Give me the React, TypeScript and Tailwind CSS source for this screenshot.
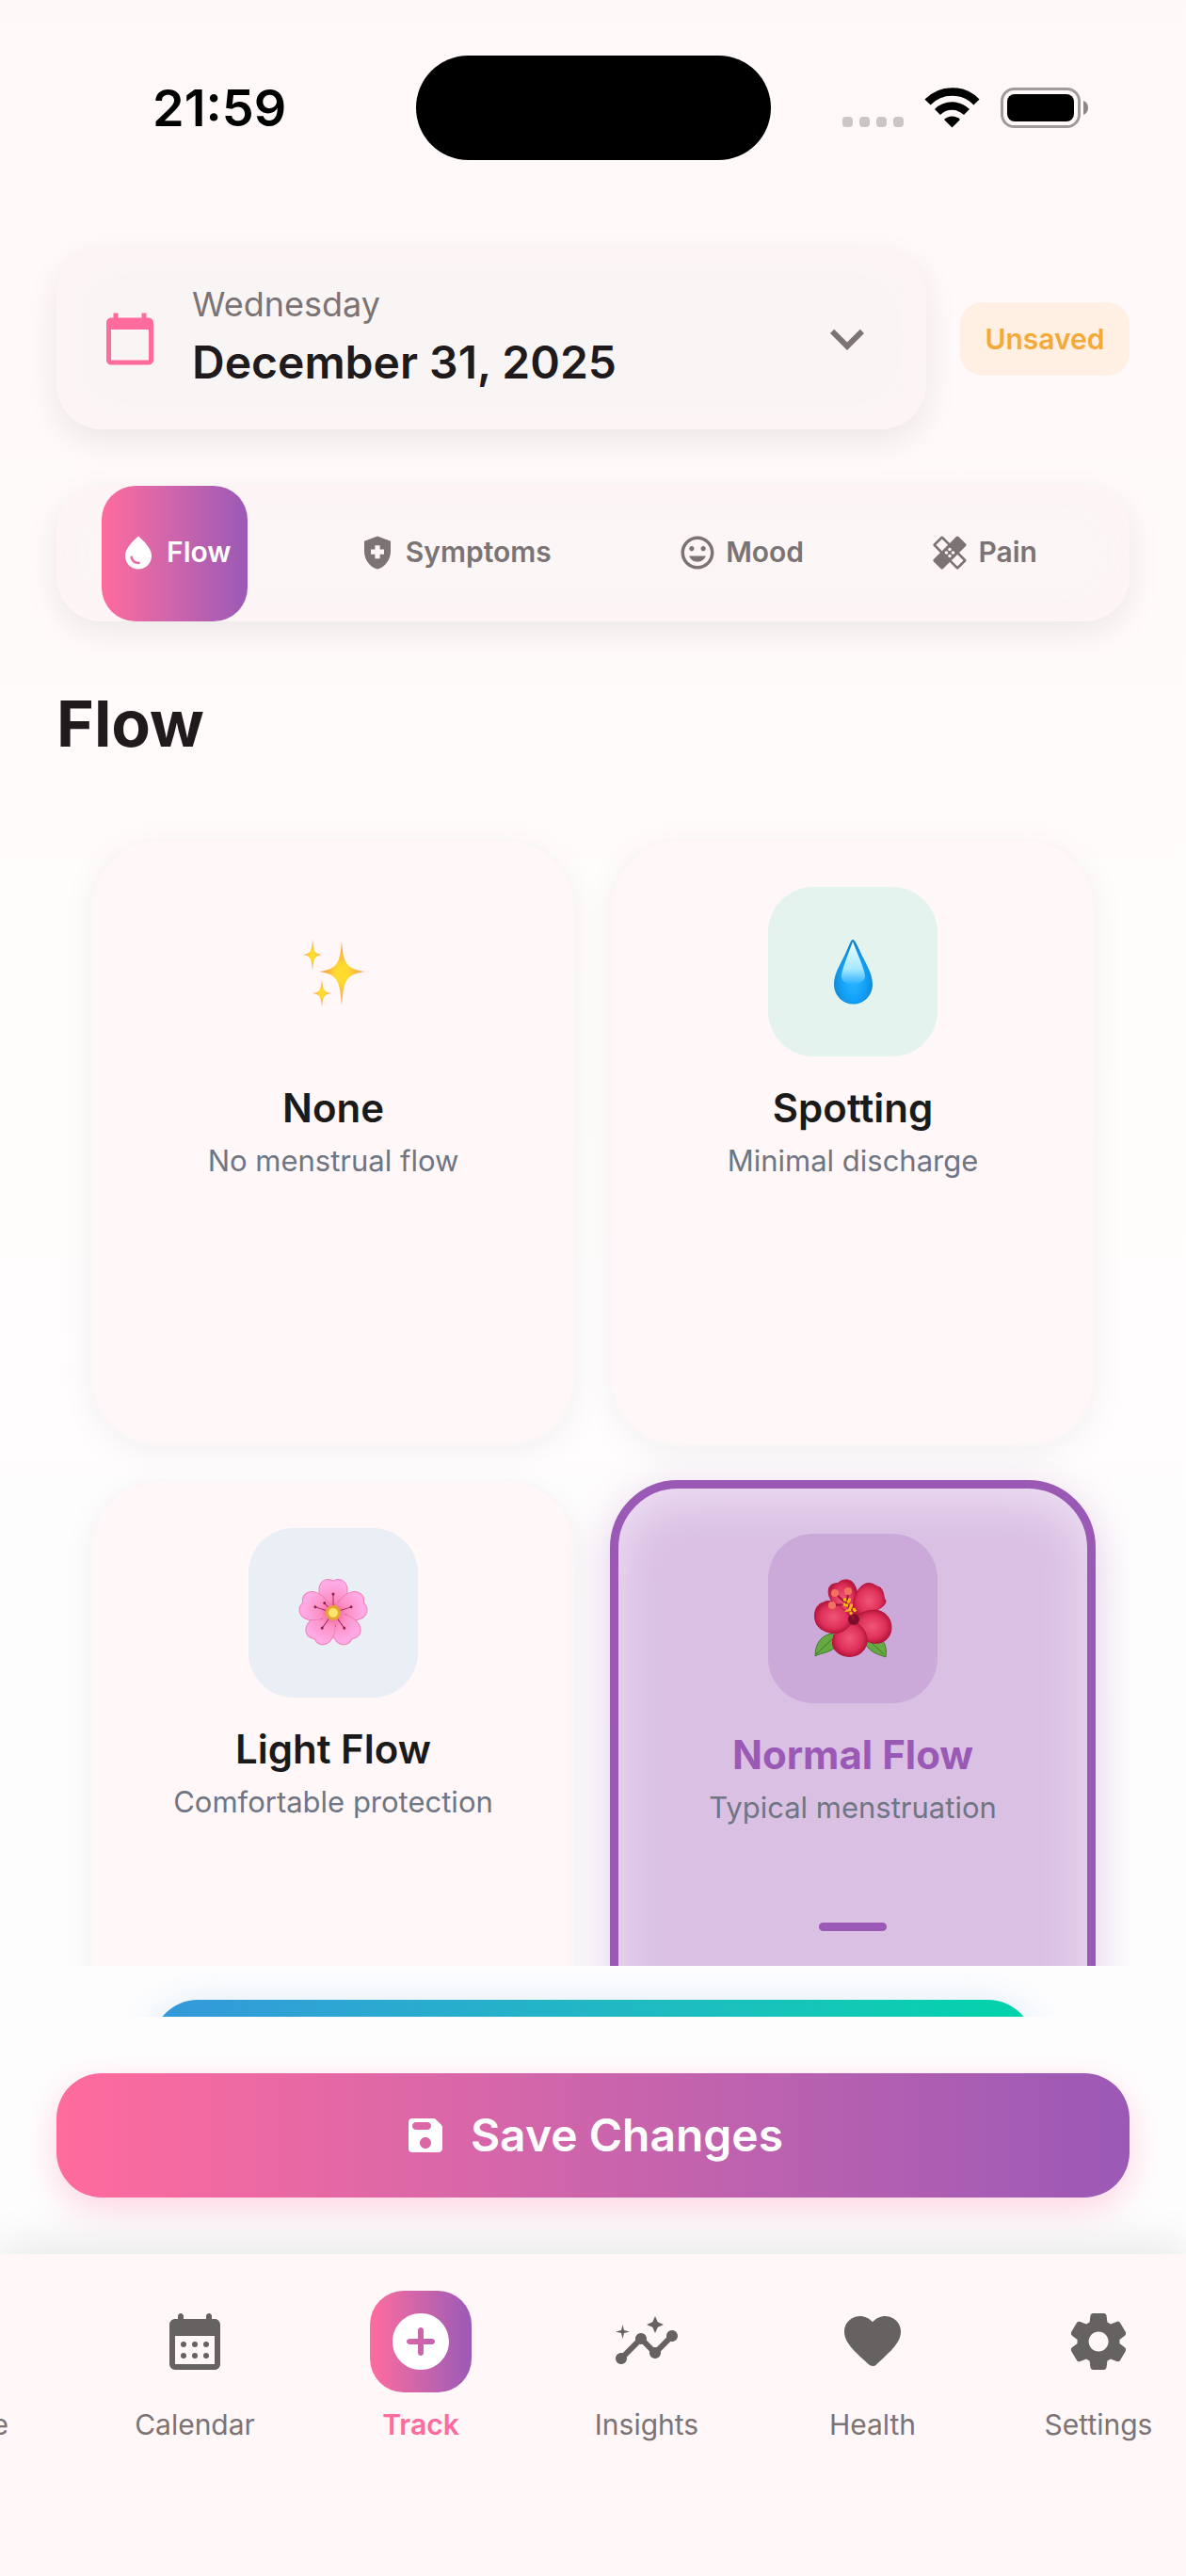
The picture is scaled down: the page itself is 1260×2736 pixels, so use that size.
import { useState, type ComponentType } from "react";
import {
  MdCalendarToday,
  MdHealing,
  MdHealthAndSafety,
  MdHome,
  MdInsights,
  MdKeyboardArrowDown,
  MdOutlineMood,
  MdWaterDrop,
} from "react-icons/md";

type IconProps = { className?: string };
type Icon = ComponentType<IconProps>;

// Rounded icon variants that react-icons does not ship
function SaveIcon({ className }: IconProps) {
  return (
    <svg viewBox="0 0 24 24" fill="currentColor" className={className}>
      <path d="M17.590 3.590C17.210 3.210 16.700 3 16.170 3H5a2 2 0 0 0-2 2v14a2 2 0 0 0 2 2h14c1.100 0 2-.9 2-2V7.830c0-.53-.21-1.040-.59-1.410l-2.820-2.830zM12 19c-1.660 0-3-1.340-3-3s1.340-3 3-3 3 1.340 3 3-1.340 3-3 3zm1-10H7c-1.100 0-2-.9-2-2s.9-2 2-2h6c1.100 0 2 .9 2 2s-.9 2-2 2z" />
    </svg>
  );
}

function CalendarIcon({ className }: IconProps) {
  return (
    <svg viewBox="0 0 24 24" fill="currentColor" className={className}>
      <path d="M17 2c-.55 0-1 .45-1 1v1H8V3c0-.55-.45-1-1-1s-1 .45-1 1v1H5c-1.110 0-1.990.9-1.990 2L3 20a2 2 0 0 0 2 2h14c1.100 0 2-.9 2-2V6c0-1.100-.9-2-2-2h-1V3c0-.55-.45-1-1-1zm2 18H5V10h14v10z" />
      <circle cx="8" cy="13" r="1" />
      <circle cx="12" cy="13" r="1" />
      <circle cx="16" cy="13" r="1" />
      <circle cx="8" cy="17" r="1" />
      <circle cx="12" cy="17" r="1" />
      <circle cx="16" cy="17" r="1" />
    </svg>
  );
}

function TrackIcon({ className }: IconProps) {
  return (
    <svg viewBox="0 0 24 24" fill="currentColor" className={className}>
      <path d="M12 2C6.480 2 2 6.480 2 12s4.480 10 10 10 10-4.480 10-10S17.520 2 12 2zm4 11h-3v3c0 .55-.45 1-1 1s-1-.45-1-1v-3H8c-.55 0-1-.45-1-1s.45-1 1-1h3V8c0-.55.45-1 1-1s1 .45 1 1v3h3c.55 0 1 .45 1 1s-.45 1-1 1z" />
    </svg>
  );
}

function HeartIcon({ className }: IconProps) {
  return (
    <svg viewBox="0 0 24 24" fill="currentColor" className={className}>
      <path d="M13.350 20.130c-.76.690-1.930.690-2.690-.010l-.11-.1C5.300 15.270 1.870 12.160 2 8.280c.06-1.700.93-3.330 2.340-4.290 2.640-1.800 5.900-.96 7.660 1.100 1.760-2.060 5.020-2.910 7.660-1.100 1.410.96 2.280 2.590 2.340 4.290.14 3.880-3.300 6.990-8.550 11.760l-.1.090z" />
    </svg>
  );
}

function SettingsIcon({ className }: IconProps) {
  return (
    <svg viewBox="0 0 24 24" fill="currentColor" className={className}>
      <path d="M19.500 12c0-.23-.01-.45-.03-.68l1.860-1.410c.4-.3.51-.86.26-1.300l-1.870-3.230a.987.987 0 0 0-1.250-.42l-2.150.91c-.37-.26-.76-.49-1.170-.68l-.29-2.310c-.06-.5-.49-.88-.99-.88h-3.730c-.51 0-.94.38-1 .88l-.29 2.310c-.41.19-.8.42-1.170.68l-2.150-.91c-.46-.2-1-.02-1.250.42L2.410 8.620c-.25.44-.14.99.26 1.300l1.860 1.410a7.343 7.343 0 0 0 0 1.350l-1.860 1.410c-.4.3-.51.86-.26 1.300l1.870 3.230c.25.44.79.62 1.250.42l2.150-.91c.37.26.76.49 1.170.68l.29 2.310c.06.5.49.88.99.88h3.730c.5 0 .93-.38.99-.88l.29-2.310c.41-.19.8-.42 1.170-.68l2.150.91c.46.2 1 .02 1.250-.42l1.870-3.230c.25-.44.14-.99-.26-1.300l-1.860-1.410c.03-.23.04-.45.04-.68zm-7.460 3.500c-1.930 0-3.500-1.570-3.500-3.500s1.570-3.500 3.500-3.500 3.500 1.570 3.500 3.500-1.570 3.500-3.500 3.500z" />
    </svg>
  );
}

const tabs: { name: string; Icon: Icon }[] = [
  { name: "Flow", Icon: MdWaterDrop },
  { name: "Symptoms", Icon: MdHealthAndSafety },
  { name: "Mood", Icon: MdOutlineMood },
  { name: "Pain", Icon: MdHealing },
];

const navItems: { name: string; Icon: Icon }[] = [
  { name: "Home", Icon: MdHome },
  { name: "Calendar", Icon: CalendarIcon },
  { name: "Track", Icon: TrackIcon },
  { name: "Insights", Icon: MdInsights },
  { name: "Health", Icon: HeartIcon },
  { name: "Settings", Icon: SettingsIcon },
];

function Sparkles() {
  return (
    <svg viewBox="0 0 72 72" className="size-[72px] overflow-visible">
      <defs>
        <radialGradient id="spark">
          <stop offset="0.25" stopColor="#ffdc2e" />
          <stop offset="1" stopColor="#f7935c" />
        </radialGradient>
      </defs>
      <g fill="url(#spark)">
        <path d="M45 4C47 28 50 33 70 36C50 39 47 44 45 72C43 44 40 39 21 36C40 33 43 28 45 4Z" />
        <path d="M14 2C15 14 16 17 24 18C16 19 15 23 14 35C13 23 12 19 4 18C12 17 13 14 14 2Z" />
        <path d="M24 44C25 55 26 58 34 59C26 60 25 63 24 74C23 63 22 60 14 59C22 58 23 55 24 44Z" />
      </g>
    </svg>
  );
}

function Droplet() {
  return (
    <svg viewBox="0 0 72 72" className="size-[72px]">
      <defs>
        <radialGradient id="drop" cx="0.5" cy="0.62" r="0.55">
          <stop offset="0" stopColor="#2ab8ff" />
          <stop offset="0.6" stopColor="#12a0f8" />
          <stop offset="1" stopColor="#1583c9" />
        </radialGradient>
        <linearGradient id="dropShine" x2="0" y2="1">
          <stop offset="0" stopColor="#f2ffff" />
          <stop offset="0.65" stopColor="#a5e9ff" />
          <stop offset="1" stopColor="#2fb0ff" />
        </linearGradient>
      </defs>
      <path
        d="M36 2C38 2 40 6 44 15C51 30 57 38 57 50A20.500 20.500 0 0 1 16 50C16 38 22 30 29 15C33 6 34 2 36 2Z"
        fill="url(#drop)"
      />
      <path d="M36 4C38 10 49 34 49 41C49 46 44 49 36 49S24 46 24 41C24 34 34 10 36 4Z" fill="url(#dropShine)" />
    </svg>
  );
}

function Blossom() {
  return (
    <svg viewBox="-36 -36 72 72" className="size-[72px] overflow-visible">
      <defs>
        <radialGradient id="petal" cx="0.5" cy="1" r="0.9">
          <stop offset="0" stopColor="#ef4f8b" />
          <stop offset="0.45" stopColor="#fb8fc4" />
          <stop offset="1" stopColor="#ffaae6" />
        </radialGradient>
      </defs>
      {[0, 72, 144, 216, 288].map((angle) => (
        <g key={angle} transform={`rotate(${angle})`}>
          <path
            d="M0 0C-8 -7 -16 -15 -15 -26C-14 -34 -7 -38 0 -34C7 -38 14 -34 15 -26C16 -15 8 -7 0 0Z"
            fill="url(#petal)"
            stroke="#f07fb4"
          />
          <path d="M0 -8V-19M4 -7L7 -12" stroke="#a82c5c" />
          <circle cy="-20" r="1.500" fill="#8d2048" />
          <circle cx="7" cy="-12" r="1.500" fill="#8d2048" />
        </g>
      ))}
      <circle r="8" fill="#e6a532" />
      <circle r="5" fill="#fbe36c" />
    </svg>
  );
}

function Hibiscus() {
  return (
    <svg viewBox="0 0 84 84" className="size-[84px]">
      <defs>
        <radialGradient id="hib">
          <stop offset="0" stopColor="#f0567a" />
          <stop offset="0.7" stopColor="#df3059" />
          <stop offset="1" stopColor="#b9183f" />
        </radialGradient>
      </defs>
      <path d="M2 82C2 67 10 59 21 58L24 72C17 79 9 78 2 82Z" fill="#66a842" stroke="#3f7a2b" />
      <path d="M77 83C79 70 74 62 63 60L56 70C62 79 69 80 77 83Z" fill="#66a842" stroke="#3f7a2b" />
      <path d="M3 80L20 64M75 80L62 68" stroke="#3f7a2b" />
      <g fill="url(#hib)" stroke="#b3153b">
        <path d="M42 42C24 32 13 20 17 9C20 3 27 6 28 3C34 -1 42 1 44 7C50 16 44 30 42 42Z" />
        <path d="M42 42C40 27 45 9 56 5C63 3 66 8 71 9C76 14 74 20 77 23C77 31 65 34 42 42Z" />
        <path d="M42 42C58 30 74 30 81 43C86 54 81 66 70 68C56 70 46 60 42 42Z" />
        <path d="M42 44C56 52 61 64 54 75C47 85 29 85 22 74C16 61 28 50 42 44Z" />
        <path d="M42 44C36 57 22 62 8 53C-2 46 0 27 11 25C18 20 30 27 42 44Z" />
      </g>
      <circle cx="43" cy="43" r="6" fill="#7b0d2b" />
      <path d="M43 43L36 27L23 15M36 27L37 13M36 27L20 28" fill="none" stroke="#a01237" strokeWidth="2" />
      <g fill="#f0735f">
        <circle cx="23" cy="15" r="4" />
        <circle cx="37" cy="13" r="4" />
        <circle cx="20" cy="28" r="4" />
      </g>
      <path
        d="M32 22L40 22L32 28L42 28L37 33L46 32L38 38"
        fill="none"
        stroke="#f8b911"
        strokeWidth="3"
        strokeDasharray="3 2"
      />
    </svg>
  );
}

const flows = [
  { name: "None", hint: "No menstrual flow", Art: Sparkles, tint: "bg-transparent" },
  { name: "Spotting", hint: "Minimal discharge", Art: Droplet, tint: "bg-[#e5f3ef]" },
  { name: "Light Flow", hint: "Comfortable protection", Art: Blossom, tint: "bg-[#eaeef5]" },
  { name: "Normal Flow", hint: "Typical menstruation", Art: Hibiscus, tint: "bg-[#cbaada]" },
];

function StatusBar() {
  return (
    <div className="grid h-[230px] grid-cols-[1fr_auto_1fr] items-start pt-[59px]">
      <div className="flex h-[111px] items-center pl-[162px] text-[54px] font-semibold leading-none text-black">
        21:59
      </div>
      <div className="h-[111px] w-[377px] rounded-full bg-black" />
      <div className="flex h-[111px] items-center justify-end pr-[102px]">
        <svg viewBox="0 0 264 44" className="h-11 w-[264px]">
          <g fill="#cbc6c6">
            <rect x="1" y="31" width="11" height="11" rx="4" />
            <rect x="19" y="31" width="11" height="11" rx="4" />
            <rect x="37" y="31" width="11" height="11" rx="4" />
            <rect x="55" y="31" width="11" height="11" rx="4" />
          </g>
          <g fill="none" stroke="#000" strokeWidth="8.500">
            <path d="M91.500 15.500A36 36 0 0 1 143.500 15.500" />
            <path d="M102 26A22 22 0 0 1 133 26" />
          </g>
          <path d="M117.500 42.500L109 34A12 12 0 0 1 126 34Z" />
          <rect x="170.500" y="1.500" width="82" height="40" rx="13" fill="none" stroke="#a09b9b" strokeWidth="3" />
          <rect x="176" y="7" width="71" height="29" rx="8" />
          <path d="M257 14Q262 16 262 21.500T257 29Z" fill="#8c8888" />
        </svg>
      </div>
    </div>
  );
}

export default function App() {
  const [tab, setTab] = useState("Flow");
  const [flow, setFlow] = useState("Normal Flow");

  return (
    <div className="flex min-h-screen flex-col overflow-hidden bg-linear-to-b from-[#fff8f8] via-[#fffdfc] via-40% to-[#fdfdff] font-['Inter','Liberation_Sans',sans-serif] text-[#1f1a1b]">
      <StatusBar />

      <main className="flex flex-col px-[60px] pt-[34px]">
        <div className="flex items-center gap-9">
          <button className="flex h-48 flex-1 items-center gap-9 rounded-[48px] bg-[#faf5f5] px-12 text-left shadow-[0_12px_36px_rgba(0,0,0,0.08),inset_0_0_60px_#fff4f5]">
            <MdCalendarToday className="size-[60px] text-[#ff6b9d]" />
            <span className="flex flex-1 flex-col pb-1">
              <span className="text-[36px] leading-[54px] text-[#7b7374]">Wednesday</span>
              <span className="text-[48px] font-semibold leading-[70px]">December 31, 2025</span>
            </span>
            <MdKeyboardArrowDown className="size-[72px] text-[#7b7374]" />
          </button>
          <span className="flex h-[78px] w-[180px] items-center justify-center rounded-3xl bg-[#fff0e3] text-[30px] font-semibold text-[#f5a938]">
            Unsaved
          </span>
        </div>

        <div
          role="tablist"
          className="mt-[60px] flex h-36 justify-between rounded-[48px] bg-[#fcf6f6] pl-12 pr-20 shadow-[0_12px_36px_rgba(0,0,0,0.08),inset_0_0_48px_#fff4f5]"
        >
          {tabs.map(({ name, Icon }) => (
            <button
              key={name}
              role="tab"
              aria-selected={tab === name}
              onClick={() => setTab(name)}
              className={`flex items-center gap-[9px] rounded-[36px] px-[18px] pb-[3px] text-[30px] font-semibold ${
                tab === name ? "bg-linear-to-r from-[#ff6b9d] to-[#9b59b6] text-white" : "text-[#7b7374]"
              }`}
            >
              <Icon className="size-[42px]" />
              {name}
            </button>
          ))}
        </div>

        <h1 className="mt-[60px] text-[68px] font-bold leading-[96px]">{tab}</h1>

        <div className="mt-6 h-[1248px] overflow-hidden">
          <div className="grid grid-cols-2 gap-9 px-9 pt-[51px]">
            {flows.map(({ name, hint, Art, tint }) => {
              const active = flow === name;
              return (
                <button
                  key={name}
                  aria-pressed={active}
                  onClick={() => setFlow(name)}
                  className={`flex h-[645px] flex-col items-center rounded-[72px] pt-12 ${
                    active
                      ? "border-9 border-[#9b59b6] bg-[#dac1e4] shadow-[0_12px_48px_rgba(155,89,182,0.3),inset_0_12px_48px_#efe0f4]"
                      : "border-3 border-[#fbf7f8] bg-[#fff7f8] shadow-[0_6px_36px_rgba(0,0,0,0.05)]"
                  }`}
                >
                  <span className={`flex size-[180px] items-center justify-center rounded-[48px] ${tint}`}>
                    <Art />
                  </span>
                  <span
                    className={`mt-7 text-[42px] leading-[54px] ${
                      active ? "font-bold text-[#9b59b6]" : "font-semibold text-[#1a1a1a]"
                    }`}
                  >
                    {name}
                  </span>
                  <span className="mt-1.5 text-[31px] leading-[45px] text-[#6f7583]">{hint}</span>
                  {active && <span className="mt-[100px] h-[9px] w-[72px] rounded-full bg-[#9b59b6]" />}
                </button>
              );
            })}
          </div>
        </div>

        <div className="h-[54px] overflow-hidden px-[102px] pt-9">
          <button
            aria-label="Add details"
            className="block h-36 w-full rounded-[48px] bg-linear-to-r from-[#3498db] to-[#00d4aa] shadow-[0_12px_48px_rgba(52,152,219,0.25)]"
          />
        </div>

        <button className="my-[60px] flex h-[132px] items-center justify-center gap-6 rounded-[48px] bg-linear-to-r from-[#ff6b9d] to-[#9b59b6] text-[48px] font-semibold text-white shadow-[0_12px_36px_rgba(255,107,157,0.28)]">
          <SaveIcon className="size-12" />
          Save Changes
        </button>
      </main>

      <nav className="flex-1 bg-[#fff7f8] pb-[120px] pt-[39px] shadow-[0_-6px_48px_rgba(0,0,0,0.1)]">
        <div className="-ml-[153px] flex">
          {navItems.map(({ name, Icon }) => {
            const active = name === "Track";
            return (
              <a key={name} href={`#${name.toLowerCase()}`} className="flex w-60 shrink-0 flex-col items-center gap-3">
                <span
                  className={`flex size-[108px] items-center justify-center rounded-[36px] ${
                    active ? "bg-linear-to-r from-[#ff6b9d] to-[#9b59b6] text-white" : "text-[#666261]"
                  }`}
                >
                  <Icon className="size-[72px]" />
                </span>
                <span
                  className={`text-[30px] leading-[45px] ${
                    active ? "font-semibold text-[#ff6b9d]" : "text-[#7b7374]"
                  }`}
                >
                  {name}
                </span>
              </a>
            );
          })}
        </div>
      </nav>
    </div>
  );
}
